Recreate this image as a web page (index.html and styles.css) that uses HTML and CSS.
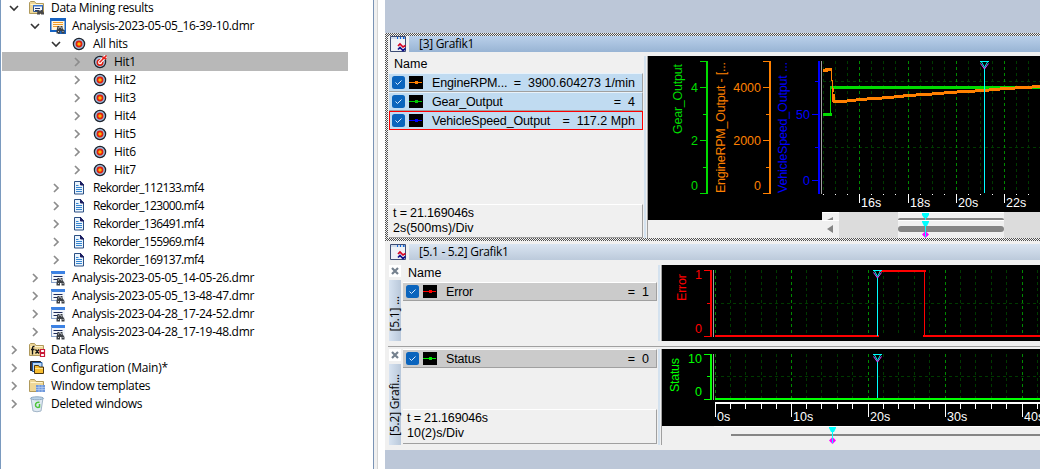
FILE: index.html
```html
<!DOCTYPE html>
<html lang="en">
<head>
    <meta charset="UTF-8">
    <title>Data Mining results</title>
    <link rel="stylesheet" href="styles.css">
</head>
<body>
    <!-- shared icons -->
    <svg width="0" height="0" class="defs">
        <defs>
            <symbol id="open" viewBox="0 0 10 10"><path d="M1 3l4 4 4-4" fill="none" stroke="#333" stroke-width="1.6"/></symbol>
            <symbol id="closed" viewBox="0 0 10 10"><path d="M3 1l4 4-4 4" fill="none" stroke="#8c8c8c" stroke-width="1.7"/></symbol>
            <symbol id="target" viewBox="0 0 18 18">
                <circle cx="9" cy="9" r="5.6" fill="#9db9dd" stroke="#1c222c" stroke-width="1.3"/>
                <circle cx="9" cy="9" r="2.6" fill="#ffb400" stroke="#dc2010" stroke-width="1.7"/>
            </symbol>
            <symbol id="hit" viewBox="0 0 18 18">
                <circle cx="9" cy="9" r="5.6" fill="#a9c0df" stroke="#1c222c" stroke-width="1.3"/>
                <circle cx="9" cy="9.4" r="2.7" fill="#fff" stroke="#dc2010" stroke-width="1.6"/>
                <path d="M8.5 9.5L15 3" stroke="#fff" stroke-width="3.4"/>
                <path d="M8.5 9.5L15.5 2.5M12 6V3.5M12.5 5.5H15.5" stroke="#e8201a" stroke-width="1.5"/>
            </symbol>
            <symbol id="doc" viewBox="0 0 18 18">
                <path d="M4.500 2.500h6l3 3v9.500h-9z" fill="#eaf4fd" stroke="#2b4f83"/>
                <path d="M10.500 2v4h3.500" fill="#1c1c60" stroke="#1c1c60"/>
                <path d="M6 6.500h2.500M6 8.500h6M6 10.500h6M6 12.500h6" stroke="#3585d0"/>
            </symbol>
            <symbol id="bino" viewBox="0 0 18 18">
                <path d="M8.500 9h2v2h1V9h2v2l2 3v2.500h-3V14h-1.500v2.500H7.500V14z" fill="#3d4146"/>
                <path d="M9 14.500h1M13.500 14.500h1M9.500 10.500v1M12.500 10.500v1" stroke="#cfd2d6"/>
            </symbol>
            <symbol id="rec" viewBox="0 0 18 18">
                <path d="M2 2.500h14v11.500H2z" fill="#f3f6fb"/>
                <path d="M2 2h14v3H2z" fill="#3c82e4"/>
                <path d="M2 13.500h7M2.500 4v10" stroke="#8aa4cc"/>
                <path d="M4.500 7.500h9M4.500 10.500h6" stroke="#1d2b5c"/>
                <use href="#bino"/>
            </symbol>
            <symbol id="rec-active" viewBox="0 0 18 18">
                <path d="M1 1h16v16H9v-2H1z" fill="#1763c2"/>
                <path d="M2.500 4h13v9h-13z" fill="#fff5df"/>
                <path d="M4 5.500h10M4 7.500h10M4 9.500h6" stroke="#f09a28"/>
                <use href="#bino"/>
            </symbol>
            <symbol id="folder" viewBox="0 0 18 18">
                <path d="M1.500 14.500v-11l1-1h4l1.500 2h7.500v10z" fill="#eed798" stroke="#b09a5c"/>
                <path d="M2.500 5.500h12" stroke="#fff5cf"/>
            </symbol>
            <symbol id="results" viewBox="0 0 18 18">
                <use href="#folder"/>
                <path d="M5.500 6.500h9v6h-9z" fill="#f4f7fc" stroke="#34588f"/>
                <path d="M5 6h10v1.500H5z" fill="#3672d0"/>
                <path d="M7 9.500h5M7 11.500h3" stroke="#22386d"/>
                <path d="M9.500 11h2v1.500h1V11h2l1.500 3v1.500h-3v-1h-1v1H9z" fill="#484848"/>
            </symbol>
            <symbol id="flows" viewBox="0 0 18 18">
                <use href="#folder"/>
                <path d="M6.500 5.500c-2-.5-2 1-2 3v5M3 8.500h3.500M7.500 8.500l3.500 4M11 8.500l-3.500 4" fill="none" stroke="#111" stroke-width="1.3"/>
                <path d="M12.500 8.500h4v3h-4zM12.500 12.500h4v3h-4zM12 9v3" fill="#fff" stroke="#c81a38" stroke-width="1.2"/>
            </symbol>
            <symbol id="config" viewBox="0 0 18 18">
                <path d="M2.500 2.500h10v9h-10z" fill="#4d352c" stroke="#222"/>
                <path d="M4.500 3.500h9.500v9h-9.500z" fill="#b7d7f8" stroke="#1d559e"/>
                <path d="M6.500 14.500v-8h4l1 1.500h4v6.500z" fill="#f7bd31" stroke="#4b3511"/>
                <path d="M7 9.500h8" stroke="#ffe58e"/>
            </symbol>
            <symbol id="templates" viewBox="0 0 18 18">
                <use href="#folder"/>
                <path d="M8 8h9v7H8z" fill="#6f98dc"/>
                <path d="M8 10.500h9M8 12.500h9M11 8v7M14 8v7" stroke="#b9d0f4" stroke-width=".7"/>
            </symbol>
            <symbol id="bin" viewBox="0 0 18 18">
                <path d="M3 3h12l-2 13q-4 1.500-8 0z" fill="#dfe9f2" stroke="#a3b6c8"/>
                <ellipse cx="9" cy="3.3" rx="6.5" ry="1.5" fill="#b9d2e7" stroke="#8ea9c2"/>
                <path d="M11.500 7.500c-2-1-4 .5-4 2.500s2 3 4 2v-3" fill="none" stroke="#4dc43a" stroke-width="1.5"/>
            </symbol>
            <symbol id="grafik" viewBox="0 0 16 16">
                <path d="M.5.5h15v15H.5z" fill="#eef1f6" stroke="#3c4c74"/>
                <path d="M1 1h14v2H1z" fill="#cfdaea"/>
                <path d="M7 2h1M10 2h1M13 2h1.500" stroke="#1668d8" stroke-width="2"/>
                <path d="M8 10l2-2 3 3 2.500-1.500" fill="none" stroke="#d80020" stroke-width="1.7"/>
                <path d="M8 13.500l2-2 3 3 2.500-2" fill="none" stroke="#12128a" stroke-width="1.7"/>
            </symbol>
            <symbol id="check" viewBox="0 0 13 13">
                <rect width="13" height="13" rx="2.5" fill="#0a64bd"/>
                <path d="M3.500 6.500l2 2 4-4" fill="none" stroke="#d9ecff"/>
            </symbol>
            <symbol id="cross" viewBox="0 0 12 12">
                <path d="M3 3l6 6M9 3l-6 6" stroke="#75818e" stroke-width="2.2"/>
            </symbol>
            <symbol id="line" viewBox="0 0 14 13">
                <path d="M0 0h14v13H0z" fill="#000"/>
                <path d="M0 6.500h13" stroke="currentColor"/>
                <path d="M6 5h3v3H6z" fill="currentColor"/>
            </symbol>
        </defs>
    </svg>

    <div class="tree">
        <div class="node l0"><svg class="arrow"><use href="#open"/></svg><svg class="icon"><use href="#results"/></svg><span>Data Mining results</span></div>
        <div class="node l1"><svg class="arrow"><use href="#open"/></svg><svg class="icon"><use href="#rec-active"/></svg><span>Analysis-2023-05-05_16-39-10.dmr</span></div>
        <div class="node l2"><svg class="arrow"><use href="#open"/></svg><svg class="icon"><use href="#target"/></svg><span>All hits</span></div>
        <div class="node l3 selected"><svg class="arrow"><use href="#closed"/></svg><svg class="icon"><use href="#hit"/></svg><span>Hit1</span></div>
        <div class="node l3"><svg class="arrow"><use href="#closed"/></svg><svg class="icon"><use href="#target"/></svg><span>Hit2</span></div>
        <div class="node l3"><svg class="arrow"><use href="#closed"/></svg><svg class="icon"><use href="#target"/></svg><span>Hit3</span></div>
        <div class="node l3"><svg class="arrow"><use href="#closed"/></svg><svg class="icon"><use href="#target"/></svg><span>Hit4</span></div>
        <div class="node l3"><svg class="arrow"><use href="#closed"/></svg><svg class="icon"><use href="#target"/></svg><span>Hit5</span></div>
        <div class="node l3"><svg class="arrow"><use href="#closed"/></svg><svg class="icon"><use href="#target"/></svg><span>Hit6</span></div>
        <div class="node l3"><svg class="arrow"><use href="#closed"/></svg><svg class="icon"><use href="#target"/></svg><span>Hit7</span></div>
        <div class="node l2 file"><svg class="arrow"><use href="#closed"/></svg><svg class="icon"><use href="#doc"/></svg><span>Rekorder_112133.mf4</span></div>
        <div class="node l2 file"><svg class="arrow"><use href="#closed"/></svg><svg class="icon"><use href="#doc"/></svg><span>Rekorder_123000.mf4</span></div>
        <div class="node l2 file"><svg class="arrow"><use href="#closed"/></svg><svg class="icon"><use href="#doc"/></svg><span>Rekorder_136491.mf4</span></div>
        <div class="node l2 file"><svg class="arrow"><use href="#closed"/></svg><svg class="icon"><use href="#doc"/></svg><span>Rekorder_155969.mf4</span></div>
        <div class="node l2 file"><svg class="arrow"><use href="#closed"/></svg><svg class="icon"><use href="#doc"/></svg><span>Rekorder_169137.mf4</span></div>
        <div class="node l1"><svg class="arrow"><use href="#closed"/></svg><svg class="icon"><use href="#rec"/></svg><span>Analysis-2023-05-05_14-05-26.dmr</span></div>
        <div class="node l1"><svg class="arrow"><use href="#closed"/></svg><svg class="icon"><use href="#rec"/></svg><span>Analysis-2023-05-05_13-48-47.dmr</span></div>
        <div class="node l1"><svg class="arrow"><use href="#closed"/></svg><svg class="icon"><use href="#rec"/></svg><span>Analysis-2023-04-28_17-24-52.dmr</span></div>
        <div class="node l1"><svg class="arrow"><use href="#closed"/></svg><svg class="icon"><use href="#rec"/></svg><span>Analysis-2023-04-28_17-19-48.dmr</span></div>
        <div class="node l0"><svg class="arrow"><use href="#closed"/></svg><svg class="icon"><use href="#flows"/></svg><span>Data Flows</span></div>
        <div class="node l0 wide"><svg class="arrow"><use href="#closed"/></svg><svg class="icon"><use href="#config"/></svg><span>Configuration (Main)*</span></div>
        <div class="node l0"><svg class="arrow"><use href="#closed"/></svg><svg class="icon"><use href="#templates"/></svg><span>Window templates</span></div>
        <div class="node l0"><svg class="arrow"><use href="#closed"/></svg><svg class="icon"><use href="#bin"/></svg><span>Deleted windows</span></div>
    </div>
    <div class="splitter"></div>

    <div class="desktop">
        <div class="window active">
            <div class="titlebar"><svg class="win-icon"><use href="#grafik"/></svg><div class="title"><span>[3] Grafik1</span></div></div>
            <div class="content">
                <div class="side">
                    <div class="head">Name</div>
                    <div class="signal blue">
                        <svg class="check"><use href="#check"/></svg><svg class="swatch orange"><use href="#line"/></svg>
                        <span class="name">EngineRPM...</span><span class="val">=&nbsp; 3900.604273 1/min</span>
                    </div>
                    <div class="signal blue">
                        <svg class="check"><use href="#check"/></svg><svg class="swatch green"><use href="#line"/></svg>
                        <span class="name">Gear_Output</span><span class="val">=&nbsp; 4</span>
                    </div>
                    <div class="signal blue current">
                        <svg class="check"><use href="#check"/></svg><svg class="swatch navy"><use href="#line"/></svg>
                        <span class="name">VehicleSpeed_Output</span><span class="val">=&nbsp; 117.2 Mph</span>
                    </div>
                    <div class="info"><span class="time">t = 21.169046s</span><br>2s(500ms)/Div</div>
                </div>
                <svg class="chart" width="392" height="182" viewBox="648 56 392 182">
                    <path d="M648 56h392v156H822v8H648z" fill="#000"/>
                    <path d="M648 220h174v18H648z" fill="#f0f0f0"/>
                    <!-- grid -->
                    <path class="grid" d="M823.500 61V193M835.500 61V193M847.500 61V193M871.500 61V193M883.500 61V193M895.500 61V193M920.500 61V193M932.500 61V193M944.500 61V193M968.500 61V193M980.500 61V193M992.500 61V193M1016.500 61V193M1028.500 61V193M823 81.500H1040M823 147.500H1040"/>
                    <path class="grid major" d="M859.500 61V193M908.500 61V193M956.500 61V193M1004.500 61V193"/>
                    <path class="crisp" d="M821.500 61V194" stroke="#a0a0a0"/>
                    <!-- y axes -->
                    <g class="axis" fill="#00dc00" stroke="#00dc00">
                        <path d="M700 61.500h6M700 87.500h6M703 114.500h3M700 140.500h6M703 167.500h3M700 193.500h6"/>
                        <rect x="706" y="61" width="2" height="133" stroke="none"/>
                    </g>
                    <g class="axis" fill="#ff8000" stroke="#ff8000">
                        <path d="M763 61.500h6M763 87.500h6M766 114.500h3M763 140.500h6M766 167.500h3M763 193.500h6"/>
                        <rect x="769" y="61" width="2" height="133" stroke="none"/>
                    </g>
                    <g class="axis" fill="#00f" stroke="#00f">
                        <path d="M815 81.500h3M812 114.500h6M815 147.500h3M812 180.500h6"/>
                        <rect x="818" y="61" width="2" height="133" stroke="none"/>
                    </g>
                    <g class="end" fill="#00dc00">
                        <text x="698" y="92">4</text><text x="698" y="145">2</text><text x="698" y="190">0</text>
                    </g>
                    <g class="end" fill="#ff8000">
                        <text x="761" y="92">4000</text><text x="761" y="145">2000</text><text x="761" y="190">0</text>
                    </g>
                    <g class="end" fill="#00f">
                        <text x="810" y="119">50</text><text x="810" y="185">0</text>
                    </g>
                    <text transform="translate(682 134) rotate(-90)" textLength="70" fill="#00dc00">Gear_Output</text>
                    <text transform="translate(725 193) rotate(-90)" textLength="131" fill="#ff8000">EngineRPM_Output - [...</text>
                    <text transform="translate(787 193) rotate(-90)" textLength="131" fill="#00f">VehicleSpeed_Output ...</text>
                    <!-- curves -->
                    <path class="crisp" d="M823 113h9v3h-9zM830 87h1v27h-1zM830 86h210v3H830z" fill="#00dc00"/>
                    <path class="crisp" d="M823 70.500h3v-1h6" stroke="#ff8000" stroke-width="3" fill="none"/>
                    <path class="crisp" d="M831.500 69v11h1v22" stroke="#ff8000" fill="none"/>
                    <path class="crisp" d="M832.500 88v4M833.500 94v7" stroke="#ff8000" stroke-width="2"/>
                    <path class="crisp" d="M833 101.500L843 101.500 860 99.500 890 97.500 908 95.500 932 94 957 92 984 90.500 1006 88.500 1024 87.500 1040 86.500" stroke="#ff8000" stroke-width="3" fill="none"/>
                    <!-- cursor -->
                    <path class="crisp" d="M984.500 68V193" stroke="#00ffff"/>
                    <path d="M980.500 63.500l4 5.500 4-5.500" fill="none" stroke="#e040ff"/>
                    <path d="M980 61.500h9M981.500 62l3 5.500 3-5.500" fill="none" stroke="#00ffff"/>
                    <!-- time axis -->
                    <path class="crisp" stroke="#fff" d="M859.500 194v9M908.500 194v9M956.500 194v9M1004.500 194v9M823.500 194v1M835.500 194v1M847.500 194v1M871.500 194v1M883.500 194v1M895.500 194v1M920.500 194v1M932.500 194v1M944.500 194v1M968.500 194v1M980.500 194v1M992.500 194v1M1016.500 194v1M1028.500 194v1"/>
                    <g fill="#fff"><text x="861" y="207">16s</text><text x="910" y="207">18s</text><text x="958" y="207">20s</text><text x="1006" y="207">22s</text></g>
                    <!-- scrollbars -->
                    <path d="M822 212h218v26H822z" fill="#dcdcdc"/>
                    <path d="M822 212h17v26h-17zM898 212h106v26H898z" fill="#f0f0f0"/>
                    <path d="M822 212.500h17M898 212.500h106M822 220.500h17M898 220.500h106" stroke="#fff"/>
                    <path d="M827 220l6-3v3zM827 229l6-4v8z" fill="#858585"/>
                    <path d="M898 220q0-2 2-2h102q2 0 2 2z" fill="#858585"/>
                    <rect x="898" y="226" width="106" height="6" rx="3" fill="#858585"/>
                    <path d="M922 213h7v2l-2 3h-3l-2-3zM922 221h7v1l-2 4h-3l-2-4z" fill="#00ffff"/>
                    <path d="M922 234.500l3.500-3.500 3.500 3.500-3.500 3.500z" fill="#f0f"/>
                    <path d="M925.500 213v7M925.500 221v16" stroke="#00ffff"/>
                </svg>
            </div>
        </div>

        <div class="window second">
            <div class="titlebar"><svg class="win-icon"><use href="#grafik"/></svg><div class="title"><span>[5.1 - 5.2] Grafik1</span></div></div>
            <div class="pane top">
                <div class="tabs"><svg class="close"><use href="#cross"/></svg><div class="tab"><span>[5.1] ...</span></div></div>
                <div class="side">
                    <div class="head">Name</div>
                    <div class="signal">
                        <svg class="check"><use href="#check"/></svg><svg class="swatch red"><use href="#line"/></svg>
                        <span class="name">Error</span><span class="val">=&nbsp; 1</span>
                    </div>
                </div>
                <svg class="chart" width="378" height="76" viewBox="662 265 378 76">
                    <path d="M662 265h378v76H662z" fill="#000"/>
                    <path class="grid" d="M730.500 270V335M745.500 270V335M761.500 270V335M776.500 270V335M806.500 270V335M821.500 270V335M837.500 270V335M852.500 270V335M883.500 270V335M898.500 270V335M914.500 270V335M929.500 270V335M960.500 270V335M975.500 270V335M991.500 270V335M1006.500 270V335M1037.500 270V335M715 303.500H1040"/>
                    <path class="grid major" d="M715.500 270V335M791.500 270V335M868.500 270V335M945.500 270V335M1022.500 270V335"/>
                    <path class="crisp" d="M713.500 270V337" stroke="#a0a0a0"/>
                    <g class="axis" fill="#f00" stroke="#f00">
                        <path d="M704 270.500h6M707 303.500h3M704 336.500h6"/>
                        <rect x="710" y="270" width="2" height="67" stroke="none"/>
                    </g>
                    <g class="end" fill="#f00"><text x="702" y="279">1</text><text x="702" y="333">0</text></g>
                    <text transform="translate(686 301) rotate(-90)" textLength="27" fill="#f00">Error</text>
                    <path class="crisp" d="M715 335h164v2H715zM879 270h47v2h-47zM924 270h1v66h-1zM923 335h117v2H923z" fill="#f00"/>
                    <path class="crisp" d="M877.500 277V336" stroke="#00ffff"/>
                    <path d="M873.500 272.500l4 5.500 4-5.500" fill="#000" stroke="#e040ff"/>
                    <path d="M873 270.500h9M874.500 271l3 5.500 3-5.500" fill="none" stroke="#00ffff"/>
                </svg>
            </div>
            <div class="divider"></div>
            <div class="pane bottom">
                <div class="tabs"><svg class="close"><use href="#cross"/></svg><div class="tab"><span>[5.2] Grafi...</span></div></div>
                <div class="side">
                    <div class="signal">
                        <svg class="check"><use href="#check"/></svg><svg class="swatch lime"><use href="#line"/></svg>
                        <span class="name">Status</span><span class="val">=&nbsp; 0</span>
                    </div>
                    <div class="info"><span class="time">t = 21.169046s</span><br>10(2)s/Div</div>
                </div>
                <svg class="chart" width="378" height="96" viewBox="662 349 378 96">
                    <path d="M662 349h378v77H662z" fill="#000"/>
                    <path class="grid" d="M730.500 354V398M745.500 354V398M761.500 354V398M776.500 354V398M806.500 354V398M821.500 354V398M837.500 354V398M852.500 354V398M883.500 354V398M898.500 354V398M914.500 354V398M929.500 354V398M960.500 354V398M975.500 354V398M991.500 354V398M1006.500 354V398M1037.500 354V398M715 376.500H1040"/>
                    <path class="grid major" d="M715.500 354V398M791.500 354V398M868.500 354V398M945.500 354V398M1022.500 354V398"/>
                    <path class="crisp" d="M713.500 354V400" stroke="#a0a0a0"/>
                    <g class="axis" fill="#0f0" stroke="#0f0">
                        <path d="M704 354.500h6M707 376.500h3M704 399.500h6"/>
                        <rect x="710" y="354" width="2" height="46" stroke="none"/>
                    </g>
                    <g class="end" fill="#0f0"><text x="702" y="363">10</text><text x="702" y="396">0</text></g>
                    <text transform="translate(679 392) rotate(-90)" textLength="34" fill="#0f0">Status</text>
                    <path class="crisp" d="M877.500 361V399" stroke="#00ffff"/>
                    <path d="M873.500 356.500l4 5.500 4-5.500" fill="none" stroke="#e040ff"/>
                    <path d="M873 354.500h9M874.500 355l3 5.500 3-5.500" fill="none" stroke="#00ffff"/>
                    <path d="M715 398h325v2H715z" fill="#0f0"/>
                    <!-- time axis -->
                    <path d="M715 402h325v2H715z" fill="#fff"/>
                    <path class="crisp" stroke="#fff" d="M715.500 402v15M791.500 402v15M868.500 402v15M945.500 402v15M1022.500 402v15M730.500 402v7M745.500 402v7M761.500 402v7M776.500 402v7M806.500 402v7M821.500 402v7M837.500 402v7M852.500 402v7M883.500 402v7M898.500 402v7M914.500 402v7M929.500 402v7M960.500 402v7M975.500 402v7M991.500 402v7M1006.500 402v7M1037.500 402v7"/>
                    <g fill="#fff"><text x="717" y="421">0s</text><text x="793" y="421">10s</text><text x="870" y="421">20s</text><text x="947" y="421">30s</text><text x="1024" y="421">40s</text></g>
                    <path d="M714 426.500H1040" stroke="#fff"/>
                    <path d="M731 434h309v2H731z" fill="#858585"/>
                    <path d="M829 427h7v1l-2 4h-3l-2-4z" fill="#00ffff"/>
                    <path d="M829 440.500l3.500-3.500 3.500 3.500-3.500 3.500z" fill="#f0f"/>
                    <path d="M832.500 427v16" stroke="#00ffff"/>
                </svg>
            </div>
        </div>
    </div>
</body>
</html>
```

FILE: styles.css
```css
body {
    margin: 0;
    width: 1040px;
    height: 469px;
    display: flex;
    overflow: hidden;
    background: #fff;
    font-family: "Open Sans", sans-serif;
    font-size: 12px;
    color: #000;
}

.defs {
    position: absolute;
}

/* tree on the left */
.tree {
    box-sizing: border-box;
    width: 374px;
    height: 470px;
    margin-top: -1px;
    border-left: 1px solid #7a9abf;
    border-right: 1px solid #7a93b5;
    flex: none;
}

.node {
    display: flex;
    align-items: center;
    height: 18px;
    width: 346px;
    margin-left: 1px;
    box-sizing: border-box;
    white-space: nowrap;
    letter-spacing: -0.32px;
}

.node span {
    margin-top: -1px;
}

.file {
    letter-spacing: -0.66px;
}

.wide {
    letter-spacing: -0.2px;
}

.l0 { padding-left: 6.5px; }
.l1 { padding-left: 27.5px; }
.l2 { padding-left: 48.5px; }
.l3 { padding-left: 69.5px; }

.selected {
    background: #b8b8b8;
    box-shadow: 0 -1px #b8b8b8;
}

.arrow {
    width: 10px;
    height: 10px;
    margin-right: 9px;
}

.icon {
    width: 18px;
    height: 18px;
    margin-right: 5.5px;
}

.splitter {
    width: 3px;
    background: #f0f0f0;
    border-right: 1px solid #d5d5d5;
    margin-right: 7px;
    flex: none;
}

/* windows on the right */
.desktop {
    flex: 1;
    position: relative;
    background: #bcc7d8;
    overflow: hidden;
}

.window {
    position: absolute;
    left: 0;
    width: 655px;
    box-sizing: border-box;
    background: #f0f0f0;
}

.window.active {
    top: 33px;
    height: 208px;
    padding: 3px 0 3px 3px;
    background: conic-gradient(#505050 25%, #f4f4f4 0 50%, #505050 0 75%, #f4f4f4 0) 0 0 / 2px 2px;
}

.window.second {
    top: 241px;
    height: 209px;
    padding: 3px 0 0 3px;
}

.titlebar {
    display: flex;
    height: 16px;
    padding-left: 2px;
    background: #f0f0f0;
}

.win-icon {
    width: 16px;
    height: 16px;
    margin: 0 3px 0 0;
}

.title {
    flex: 1;
    padding-left: 10px;
    line-height: 16px;
    letter-spacing: -0.3px;
    background: linear-gradient(#bad0ea, #98b4d4);
}

.second .title {
    background: linear-gradient(#d9e4f1, #bccadb);
}

.content {
    display: flex;
    height: 182px;
    padding: 4px 0 0 1px;
    background: #f0f0f0;
    font-family: "Liberation Sans", Arial, sans-serif;
}

.side {
    display: flex;
    flex-direction: column;
    width: 254px;
    padding-right: 1px;
    border-right: 2px solid #d4e2ef;
    font-family: "Liberation Sans", Arial, sans-serif;
    font-size: 12.5px;
    flex: none;
}

.head {
    height: 17px;
    line-height: 17px;
    padding-left: 5px;
}

.signal {
    display: flex;
    align-items: center;
    box-sizing: border-box;
    height: 19px;
    padding: 0 7px 0 3px;
    background: #cbcbcb;
    border-style: solid;
    border-width: 1px 1px 1px 0;
    border-color: #fff #a0a0a0 #a0a0a0;
}

.signal.blue {
    background: #c0dbf1;
    border-color: #a0a0a0;
    border-top-color: #e8f2fa;
}

.signal.current {
    border: 1px solid #f00;
    padding-left: 2px;
}

.check {
    width: 13px;
    height: 13px;
    margin-right: 4px;
}

.swatch {
    width: 14px;
    height: 13px;
    margin-right: 9px;
}

.orange { color: #ff8000; }
.green { color: #00c800; }
.navy { color: #0000ff; }
.red { color: #ff0000; }
.lime { color: #00e800; }

.name {
    letter-spacing: -0.15px;
}

.val {
    margin-left: auto;
}

.info {
    margin-top: auto;
    height: 34px;
    box-sizing: border-box;
    padding: 1px 0 0 4px;
    line-height: 15px;
    border: solid #a0a0a0;
    border-width: 1px 1px 1px 0;
    border-top-color: #fff;
}

.time {
    letter-spacing: -0.15px;
}

.chart {
    flex: none;
    display: block;
    margin-left: 2px;
    box-shadow: -1px 0 #a0a0a0;
    font-family: "Liberation Sans", Arial, sans-serif;
    font-size: 12.5px;
}

.chart .grid {
    fill: none;
    stroke: #003a00;
    stroke-dasharray: 3 3;
    shape-rendering: crispEdges;
}

.chart .major {
    stroke: #008a00;
}

.end {
    text-anchor: end;
}

.axis, .crisp {
    shape-rendering: crispEdges;
}

/* second window */
.pane {
    display: flex;
    padding-left: 1px;
}

.pane.top {
    height: 76px;
    padding-top: 5px;
}

.pane.bottom {
    height: 96px;
}

.pane.bottom .info {
    height: 35px;
    margin-bottom: 1px;
}

.divider {
    height: 1px;
    margin: 5px 0 2px;
    background: #a0a0a0;
}

.tabs {
    display: flex;
    flex-direction: column;
    width: 12px;
    margin-right: 2px;
}

.close {
    width: 12px;
    height: 12px;
    margin-bottom: 3px;
    background: #fff;
}

.tab {
    flex: 1;
    display: flex;
    justify-content: center;
    align-items: flex-end;
    padding-bottom: 9px;
    background: linear-gradient(90deg, #d7e3f1, #b9c8da);
}

.tab span {
    writing-mode: vertical-rl;
    transform: rotate(180deg);
    line-height: 12px;
    letter-spacing: -0.2px;
    white-space: nowrap;
}
```
